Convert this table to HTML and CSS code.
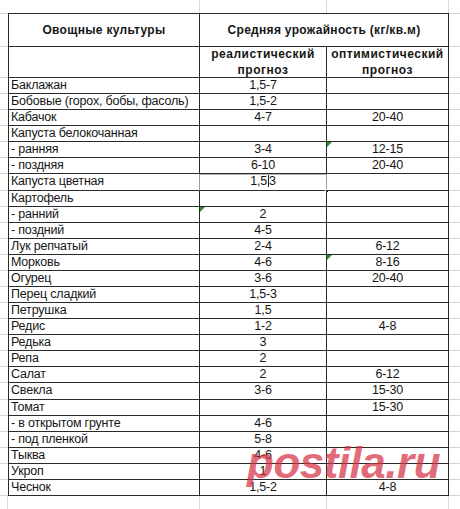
FILE: index.html
```html
<!DOCTYPE html>
<html lang="ru">
<head>
<meta charset="utf-8">
<title>Урожайность овощных культур</title>
<link rel="stylesheet" href="styles.css">
</head>
<body>
<div class="sheet">
  <!-- top strip -->
  <div class="g0"></div><div class="strip c1"></div><div class="strip c2"></div><div class="strip c3"></div><div class="g0"></div>

  <!-- header row 1 -->
  <div class="g gh"></div>
  <div class="cell c1 top hd">Овощные культуры</div>
  <div class="cell span top hd">Средняя урожайность (кг/кв.м)</div>
  <div class="g gh"></div>

  <!-- header row 2 -->
  <div class="g"></div>
  <div class="cell c1"></div>
  <div class="cell c2 hd2">реалистический<br>прогноз</div>
  <div class="cell c3 hd2">оптимистический<br>прогноз</div>
  <div class="g"></div>

  <div class="g"></div><div class="cell c1">Баклажан</div><div class="cell c2">1,5-7</div><div class="cell c3"></div><div class="g"></div>
  <div class="g"></div><div class="cell c1">Бобовые (горох, бобы, фасоль)</div><div class="cell c2">1,5-2</div><div class="cell c3"></div><div class="g"></div>
  <div class="g"></div><div class="cell c1">Кабачок</div><div class="cell c2">4-7</div><div class="cell c3">20-40</div><div class="g"></div>
  <div class="g"></div><div class="cell c1">Капуста белокочанная</div><div class="cell c2"></div><div class="cell c3"></div><div class="g"></div>
  <div class="g"></div><div class="cell c1">- ранняя</div><div class="cell c2">3-4</div><div class="cell c3 flag">12-15</div><div class="g"></div>
  <div class="g"></div><div class="cell c1">- поздняя</div><div class="cell c2">6-10</div><div class="cell c3">20-40</div><div class="g"></div>
  <div class="g"></div><div class="cell c1 selnext">Капуста цветная</div><div class="cell c2 sel">1,5<span class="caret"></span>3<span class="handle"></span></div><div class="cell c3"></div><div class="g"></div>
  <div class="g"></div><div class="cell c1">Картофель</div><div class="cell c2"></div><div class="cell c3"></div><div class="g"></div>
  <div class="g"></div><div class="cell c1">- ранний</div><div class="cell c2 flag">2</div><div class="cell c3"></div><div class="g"></div>
  <div class="g"></div><div class="cell c1">- поздний</div><div class="cell c2">4-5</div><div class="cell c3"></div><div class="g"></div>
  <div class="g"></div><div class="cell c1">Лук репчатый</div><div class="cell c2">2-4</div><div class="cell c3">6-12</div><div class="g"></div>
  <div class="g"></div><div class="cell c1">Морковь</div><div class="cell c2">4-6</div><div class="cell c3 flag">8-16</div><div class="g"></div>
  <div class="g"></div><div class="cell c1">Огурец</div><div class="cell c2">3-6</div><div class="cell c3">20-40</div><div class="g"></div>
  <div class="g"></div><div class="cell c1">Перец сладкий</div><div class="cell c2">1,5-3</div><div class="cell c3"></div><div class="g"></div>
  <div class="g"></div><div class="cell c1">Петрушка</div><div class="cell c2">1,5</div><div class="cell c3"></div><div class="g"></div>
  <div class="g"></div><div class="cell c1">Редис</div><div class="cell c2">1-2</div><div class="cell c3">4-8</div><div class="g"></div>
  <div class="g"></div><div class="cell c1">Редька</div><div class="cell c2">3</div><div class="cell c3"></div><div class="g"></div>
  <div class="g"></div><div class="cell c1">Репа</div><div class="cell c2">2</div><div class="cell c3"></div><div class="g"></div>
  <div class="g"></div><div class="cell c1">Салат</div><div class="cell c2">2</div><div class="cell c3">6-12</div><div class="g"></div>
  <div class="g"></div><div class="cell c1">Свекла</div><div class="cell c2">3-6</div><div class="cell c3">15-30</div><div class="g"></div>
  <div class="g"></div><div class="cell c1">Томат</div><div class="cell c2"></div><div class="cell c3">15-30</div><div class="g"></div>
  <div class="g"></div><div class="cell c1">- в открытом грунте</div><div class="cell c2">4-6</div><div class="cell c3"></div><div class="g"></div>
  <div class="g"></div><div class="cell c1">- под пленкой</div><div class="cell c2">5-8</div><div class="cell c3"></div><div class="g"></div>
  <div class="g"></div><div class="cell c1">Тыква</div><div class="cell c2">4-6</div><div class="cell c3"></div><div class="g"></div>
  <div class="g"></div><div class="cell c1">Укроп</div><div class="cell c2">1</div><div class="cell c3"></div><div class="g"></div>
  <div class="g"></div><div class="cell c1">Чеснок</div><div class="cell c2">1,5-2</div><div class="cell c3">4-8</div><div class="g"></div>

  <!-- bottom strip -->
  <div class="bstrip"></div><div class="bstrip c1"></div><div class="bstrip c2"></div><div class="bstrip c3"></div><div class="g0"></div>

  <div class="watermark">postila.ru</div>
</div>
</body>
</html>
```

FILE: styles.css
```css
html, body {
  margin: 0;
  padding: 0;
  background: #ffffff;
}

.sheet {
  position: relative;
  width: 460px;
  height: 509px;
  overflow: hidden;
  display: grid;
  grid-template-columns: 8px 192px 127px 122px 11px;
  grid-template-rows: 13px 34px 31px repeat(26, 16.08px) 1fr;
  font-family: "Liberation Sans", Arial, sans-serif;
  font-size: 12.5px;
  letter-spacing: -0.2px;
  color: #161616;
}

.g {
  border-bottom: 1px solid #d6d6d6;
}

.gh {
  border-top: 1px solid #d6d6d6;
}

.strip {
  border-right: 1px solid #d8d8d8;
}

.bstrip {
  border-right: 1px solid #d8d8d8;
}

.cell {
  position: relative;
  border-right: 1px solid #2a2a2a;
  border-bottom: 1px solid #2a2a2a;
  line-height: 15px;
  white-space: nowrap;
}

.cell.c1 {
  border-left: 1px solid #2a2a2a;
  padding-left: 2px;
}

.cell.c2,
.cell.c3 {
  text-align: center;
}

.cell.top {
  border-top: 1px solid #2a2a2a;
}

.cell.span {
  grid-column: span 2;
}

.hd {
  display: flex;
  align-items: center;
  justify-content: center;
  font-weight: bold;
  font-size: 12px;
  letter-spacing: 0.3px;
}

.cell.c1.hd {
  padding-left: 0;
}

.hd2 {
  font-weight: bold;
  font-size: 12px;
  letter-spacing: 0.5px;
  line-height: 16px;
  display: flex;
  align-items: center;
  justify-content: center;
}

.selnext {
  border-right-color: #9a9a9a;
}

.sel {
  border-right-color: #9a9a9a;
  box-shadow: inset 0 1px 0 #b5b5b5;
}

.caret {
  display: inline-block;
  width: 1px;
  height: 12px;
  background: #222;
  vertical-align: -2px;
  margin: 0 0.5px;
}

.handle {
  position: absolute;
  right: -3px;
  bottom: -3px;
  width: 4px;
  height: 4px;
  background: #222;
  border: 1px solid #fff;
  box-sizing: border-box;
}

.flag::before {
  content: "";
  position: absolute;
  left: 0;
  top: 0;
  border-top: 5px solid #2e8b2e;
  border-right: 5px solid transparent;
}

.watermark {
  position: absolute;
  left: 247px;
  top: 441px;
  font-family: "Liberation Sans", Arial, sans-serif;
  font-weight: bold;
  font-style: italic;
  font-size: 44px;
  line-height: 44px;
  letter-spacing: -0.5px;
  color: rgba(215, 50, 70, 0.72);
  white-space: nowrap;
  pointer-events: none;
}
```
